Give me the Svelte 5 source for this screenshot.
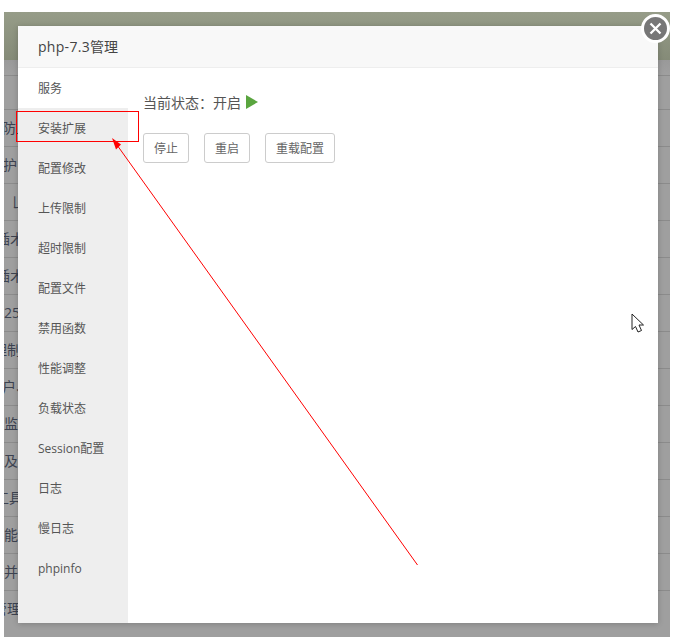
<script>
  const menu = ['服务', '安装扩展', '配置修改', '上传限制', '超时限制', '配置文件', '禁用函数', '性能调整', '负载状态', 'Session配置', '日志', '慢日志', 'phpinfo'];
  const actions = ['停止', '重启', '重载配置'];

  // rows of the page behind the dialog, only their first letters show
  const rows = [
    { text: '防止', shift: -2 },
    { text: '护', shift: -1 },
    { text: 'ㄩ', shift: 8 },
    { text: '插术', shift: -8 },
    { text: '插术', shift: -8 },
    { text: '725', shift: -8 },
    { text: '理制', shift: -11 },
    { text: '户、', shift: -2 },
    { text: '监控', shift: 0 },
    { text: '及安', shift: 0 },
    { text: '工具', shift: -9 },
    { text: '能力', shift: 0 },
    { text: '并且', shift: 0 },
    { text: '管理', shift: -11 }
  ];

  let current = $state(0);
</script>

<div class="screen">
  <div class="page">
    <div class="page-top"></div>
    <div class="page-gap"></div>
    <div class="page-row first"></div>
    {#each rows as row}
      <div class="page-row"><span style="margin-left: {row.shift}px">{row.text}</span></div>
    {/each}
  </div>

  <div class="dialog">
    <div class="dialog-title"><span class="latin">php-7.3</span>管理</div>
    <div class="dialog-body">
      <ul class="side">
        {#each menu as item, index}
          <li>
            <button type="button" class="side-item" class:active={index === current} onclick={() => (current = index)}>{item}</button>
          </li>
        {/each}
      </ul>
      <div class="main">
        <p class="status">当前状态：开启 <span class="play"></span></p>
        <div class="actions">
          {#each actions as action}
            <button type="button" class="btn">{action}</button>
          {/each}
        </div>
      </div>
    </div>
  </div>

  <button type="button" class="close" aria-label="关闭">
    <svg width="13" height="13" viewBox="0 0 13 13">
      <path d="M1.500 1.500l10 10M11.500 1.500l-10 10" stroke="#fff" stroke-width="2.300" fill="none" />
    </svg>
  </button>

  <svg class="marks" width="682" height="637" viewBox="0 0 682 637">
    <rect x="16.500" y="111.500" width="122" height="30" fill="none" stroke="#f00" stroke-width="1" />
    <line x1="417.500" y1="565" x2="117" y2="145" stroke="#f00" stroke-width="1" />
    <path d="M112 138l9 6.500-5 5z" fill="#f00" />
    <path
      d="M632 314v15.500l3.500-3 2.500 5.500 3.500-1.500-2.500-5.500h4.500z"
      fill="#fff"
      stroke="#222"
      stroke-width="1"
    />
  </svg>
</div>

<style>
  :global(body) {
    margin: 0;
    background: #fff;
  }

  .screen {
    position: relative;
    width: 682px;
    height: 637px;
    padding: 12px 12px 0 4px;
    box-sizing: border-box;
    overflow: hidden;
    font-family: "Open Sans", "Noto Sans CJK SC", sans-serif;
  }

  .page {
    height: 625px;
    overflow: hidden;
    background: #9f9f9f;
  }

  .page-top {
    height: 48px;
    background: linear-gradient(180deg, #969c88, #858b78);
  }

  .page-gap {
    height: 15px;
    background: linear-gradient(180deg, #999, #a0a0a0);
  }

  .page-row {
    height: 37px;
    box-sizing: border-box;
    padding-bottom: 2px;
    border-top: 1px solid #8b8b8b;
    display: flex;
    align-items: center;
    white-space: nowrap;
    font-size: 14px;
    color: #3c4250;
  }

  .page-row.first {
    height: 34px;
  }

  .dialog {
    position: absolute;
    left: 18px;
    top: 26px;
    width: 640px;
    height: 597px;
    display: flex;
    flex-direction: column;
    background: #fff;
    box-shadow: 0 1px 6px rgba(0, 0, 0, 0.2);
  }

  .dialog-title {
    height: 41px;
    line-height: 41px;
    padding-left: 20px;
    background: #f8f8f8;
    border-bottom: 1px solid #eee;
    font-size: 14px;
    color: #444;
  }

  .latin {
    letter-spacing: 0.3px;
  }

  .dialog-body {
    flex: 1;
    display: flex;
    min-height: 0;
  }

  .side {
    list-style: none;
    margin: 0;
    padding: 0;
    width: 110px;
    background: #eee;
  }

  .side-item {
    display: block;
    width: 100%;
    height: 40px;
    padding: 0 0 0 20px;
    border: none;
    background: none;
    font: inherit;
    font-size: 12px;
    color: #555;
    text-align: left;
    cursor: pointer;
  }

  .side-item.active {
    background: #fff;
  }

  .main {
    flex: 1;
    padding: 25px 15px 0;
  }

  .status {
    margin: 0;
    height: 20px;
    line-height: 20px;
    font-size: 14px;
    color: #555;
  }

  .play {
    display: inline-block;
    margin-left: 1px;
    border-left: 12px solid #5aa53f;
    border-top: 7px solid transparent;
    border-bottom: 7px solid transparent;
    vertical-align: -1px;
  }

  .actions {
    display: flex;
    gap: 15px;
    margin-top: 20px;
  }

  .btn {
    height: 30px;
    padding: 0 10px;
    border: 1px solid #ccc;
    border-radius: 3px;
    background: #fff;
    font: inherit;
    font-size: 12px;
    color: #666;
    cursor: pointer;
  }

  .close {
    position: absolute;
    left: 641px;
    top: 14px;
    width: 29px;
    height: 29px;
    padding: 0;
    display: grid;
    place-items: center;
    border: 3px solid #fff;
    border-radius: 50%;
    box-sizing: border-box;
    background: #777;
    cursor: pointer;
  }

  .marks {
    position: absolute;
    left: 0;
    top: 0;
    pointer-events: none;
  }
</style>
